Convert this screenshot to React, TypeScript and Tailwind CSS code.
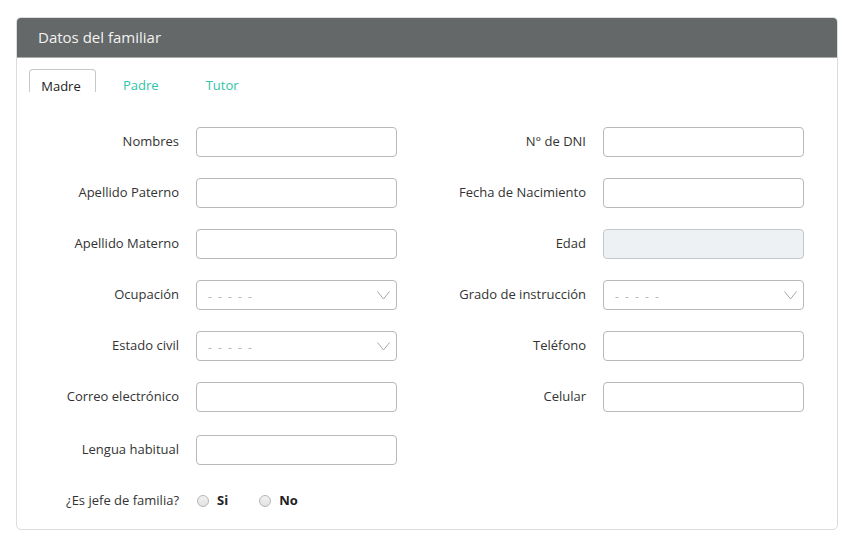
import React from "react";

const Chevron = () => (
  <svg width="13" height="9" viewBox="0 0 13 9" fill="none" className="shrink-0">
    <path d="M0.5 0.5 L6.5 8 L12.5 0.5" stroke="#a8a8a8" strokeWidth="1" />
  </svg>
);

const TextInput = ({ disabled = false }: { disabled?: boolean }) => (
  <div
    className={`w-[201px] h-[30px] rounded-[4px] border ${
      disabled ? "bg-[#edf1f3] border-[#c4c8ca]" : "bg-white border-[#b8b8b8]"
    }`}
  />
);

const SelectInput = () => (
  <div className="w-[201px] h-[30px] rounded-[4px] border border-[#b8b8b8] bg-white flex items-center justify-between pl-[11px] pr-[6px]">
    <span className="text-[#b5b5b5] text-[12px] tracking-[1.5px] pt-[3px]">- - - - -</span>
    <Chevron />
  </div>
);

const Field = ({ label, children }: { label: string; children: React.ReactNode }) => (
  <div className="flex items-center h-[30px]">
    <div className="w-[162px] text-right text-[#333] text-[13px]">{label}</div>
    <div className="ml-[17px]">{children}</div>
  </div>
);

const Radio = ({ label }: { label: string }) => (
  <label className="flex items-center gap-[8px]">
    <span className="w-[12px] h-[12px] rounded-full border border-[#b5b5b5] bg-gradient-to-b from-[#f2f2f2] to-[#e2e2e2]" />
    <span className="font-bold text-[13px] text-[#222]">{label}</span>
  </label>
);

export default function App() {
  return (
    <div
      className="w-[852px] h-[545px] bg-white pt-[17px] pl-[16px]"
      style={{ fontFamily: '"Open Sans", "Noto Sans", sans-serif' }}
    >
      <div className="w-[822px] h-[513px] border border-[#dcdcdc] rounded-[5px] overflow-hidden flex flex-col">
        <div className="h-[40px] bg-[#646868] flex items-center px-[21px] border-b border-[#a9abab]">
          <span className="text-[#f2f2f2] text-[15px]">Datos del familiar</span>
        </div>

        <div className="flex items-end pl-[12px] h-[34px]">
          <div className="w-[67px] h-[23px] border border-b-0 border-[#c8c8c8] rounded-t-[4px] flex items-start justify-center pr-[3px] text-[13px] text-[#222] pt-[7px]">
            Madre
          </div>
          <div className="ml-[27px] text-[13px] text-[#2fc5a6] h-[23px] pt-[7px]">Padre</div>
          <div className="ml-[47px] text-[13px] text-[#2fc5a6] h-[23px] pt-[7px]">Tutor</div>
        </div>

        <div className="flex gap-[27px] mt-[35px]">
          <div className="flex flex-col gap-[21px]">
            <Field label="Nombres"><TextInput /></Field>
            <Field label="Apellido Paterno"><TextInput /></Field>
            <Field label="Apellido Materno"><TextInput /></Field>
            <Field label="Ocupación"><SelectInput /></Field>
            <Field label="Estado civil"><SelectInput /></Field>
            <Field label="Correo electrónico"><TextInput /></Field>
            <div className="mt-[2px]">
              <Field label="Lengua habitual"><TextInput /></Field>
            </div>
            <div className="flex items-center h-[30px]">
              <div className="w-[162px] text-right text-[#333] text-[13px]">¿Es jefe de familia?</div>
              <div className="ml-[18px] flex items-center gap-[31px]">
                <Radio label="Si" />
                <Radio label="No" />
              </div>
            </div>
          </div>
          <div className="flex flex-col gap-[21px]">
            <Field label="N° de DNI"><TextInput /></Field>
            <Field label="Fecha de Nacimiento"><TextInput /></Field>
            <Field label="Edad"><TextInput disabled /></Field>
            <Field label="Grado de instrucción"><SelectInput /></Field>
            <Field label="Teléfono"><TextInput /></Field>
            <Field label="Celular"><TextInput /></Field>
          </div>
        </div>
      </div>
    </div>
  );
}
